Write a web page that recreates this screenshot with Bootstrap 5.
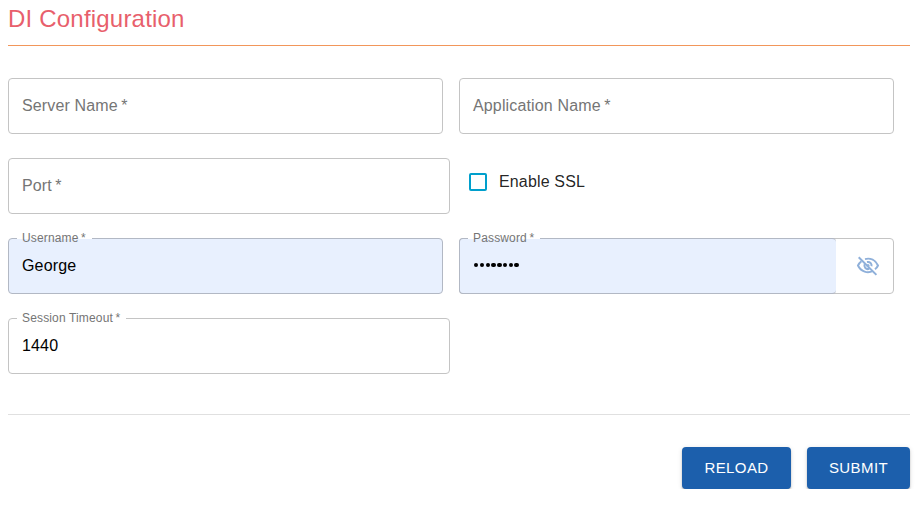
<!DOCTYPE html>
<html lang="en">
<head>
<meta charset="utf-8">
<meta name="viewport" content="width=device-width, initial-scale=1">
<title>DI Configuration</title>
<link href="https://cdn.jsdelivr.net/npm/bootstrap@5.3.0/dist/css/bootstrap.min.css" rel="stylesheet">
<style>
body{font-family:"Liberation Sans",Arial,sans-serif;font-size:16px;color:rgba(0,0,0,.87);letter-spacing:.15px;background:#fff}
.page{padding:0 10px 0 8px}
.title{font-size:24px;line-height:38px;color:#e85f6c;letter-spacing:.2px;height:45px;font-weight:400}
.rule-accent{height:1px;background:#f2965a}
.fields{padding-top:32px;display:grid;row-gap:24px}
.line{height:56px}
.outlined{width:435px;height:56px;border:1px solid #c4c4c4;border-radius:4px;padding:0 13px;margin:0}
.wide{width:442px}
.filled{background:#e8f0fe;border-color:#b2b8c4}
.hint{color:#757575}
.floating{left:8px;top:-8px;padding:0 6px 0 5px;font-size:12px;line-height:14px;color:#757575;white-space:nowrap}
.floating::before{content:"";position:absolute;left:0;right:0;top:7px;height:1px;background:#fff}
.floating span{position:relative}
.value{color:#000;letter-spacing:.15px}
.autofill{width:377px;margin:-1px 0 -1px -1px;background:#e8f0fe;border:1px solid #b2b8c4;border-right:0;border-radius:4px;padding-left:14px}
.dots{gap:1.4px;padding-bottom:2px}
.dots i{width:4.4px;height:4.4px;border-radius:50%;background:#000}
.ssl-box{width:18px;height:18px;border:2px solid #009fcc;border-radius:2px;margin:0 12px 0 19px}
.rule-soft{height:1px;background:#e0e0e0;margin-top:40px}
.action{--bs-btn-bg:#1c5fac;--bs-btn-border-color:#1c5fac;--bs-btn-color:#fff;height:42px;border:0;border-radius:4px;padding:0;font-size:15px;letter-spacing:.4px;box-shadow:0 3px 1px -2px rgba(0,0,0,.2),0 2px 2px rgba(0,0,0,.2),0 1px 5px rgba(0,0,0,.12)}
.reload{width:109px}
.submit{width:103px}
.eye{margin:auto 13px auto auto}
</style>
<script src="https://cdn.jsdelivr.net/npm/bootstrap@5.3.0/dist/js/bootstrap.bundle.min.js"></script>
</head>
<body>
<main class="page">
  <h1 class="title m-0">DI Configuration</h1>
  <div class="rule-accent"></div>
  <form class="fields">
    <div class="line d-flex gap-3">
      <label class="outlined hint d-flex align-items-center">Server Name&#8201;*</label>
      <label class="outlined hint d-flex align-items-center">Application Name&#8201;*</label>
    </div>
    <div class="line d-flex">
      <label class="outlined wide hint d-flex align-items-center">Port&#8201;*</label>
      <label class="d-flex align-items-center pb-2"><span class="ssl-box"></span>Enable SSL</label>
    </div>
    <div class="line d-flex gap-3">
      <div class="outlined filled position-relative d-flex align-items-center">
        <label class="floating position-absolute"><span>Username&#8201;*</span></label>
        <span class="value">George</span>
      </div>
      <div class="outlined position-relative d-flex p-0">
        <label class="floating position-absolute"><span>Password&#8201;*</span></label>
        <div class="autofill d-flex align-items-center dots"><i></i><i></i><i></i><i></i><i></i><i></i><i></i><i></i></div>
        <svg class="eye" width="24" height="24" viewBox="0 0 24 24" fill="none" stroke="#8fb0da" stroke-width="2"><path d="M9 5.1C14.5 3.6 19.4 6.2 22 11.5c-.7 1.5-1.7 2.8-3 3.8M5.4 7.2C3.9 8.3 2.8 9.8 2 11.5c3 6.3 9.7 8.2 15 5.3M11 8.1c3-.6 5 1.5 4.500 4.200M8.700 10.200c-1.300 3 1.500 5.800 4.500 4.600"/><circle cx="12" cy="11.500" r="1.500" fill="#8fb0da" stroke="none"/><path d="M2.700 3.200l17.700 17.700"/></svg>
      </div>
    </div>
    <div class="line d-flex">
      <div class="outlined wide position-relative d-flex align-items-center">
        <label class="floating position-absolute"><span>Session Timeout&#8201;*</span></label>
        <span class="value">1440</span>
      </div>
    </div>
  </form>
  <div class="rule-soft"></div>
  <div class="d-flex justify-content-end gap-3 pt-4 mt-2">
    <button type="button" class="btn action reload">RELOAD</button>
    <button type="button" class="btn action submit">SUBMIT</button>
  </div>
</main>
</body>
</html>
